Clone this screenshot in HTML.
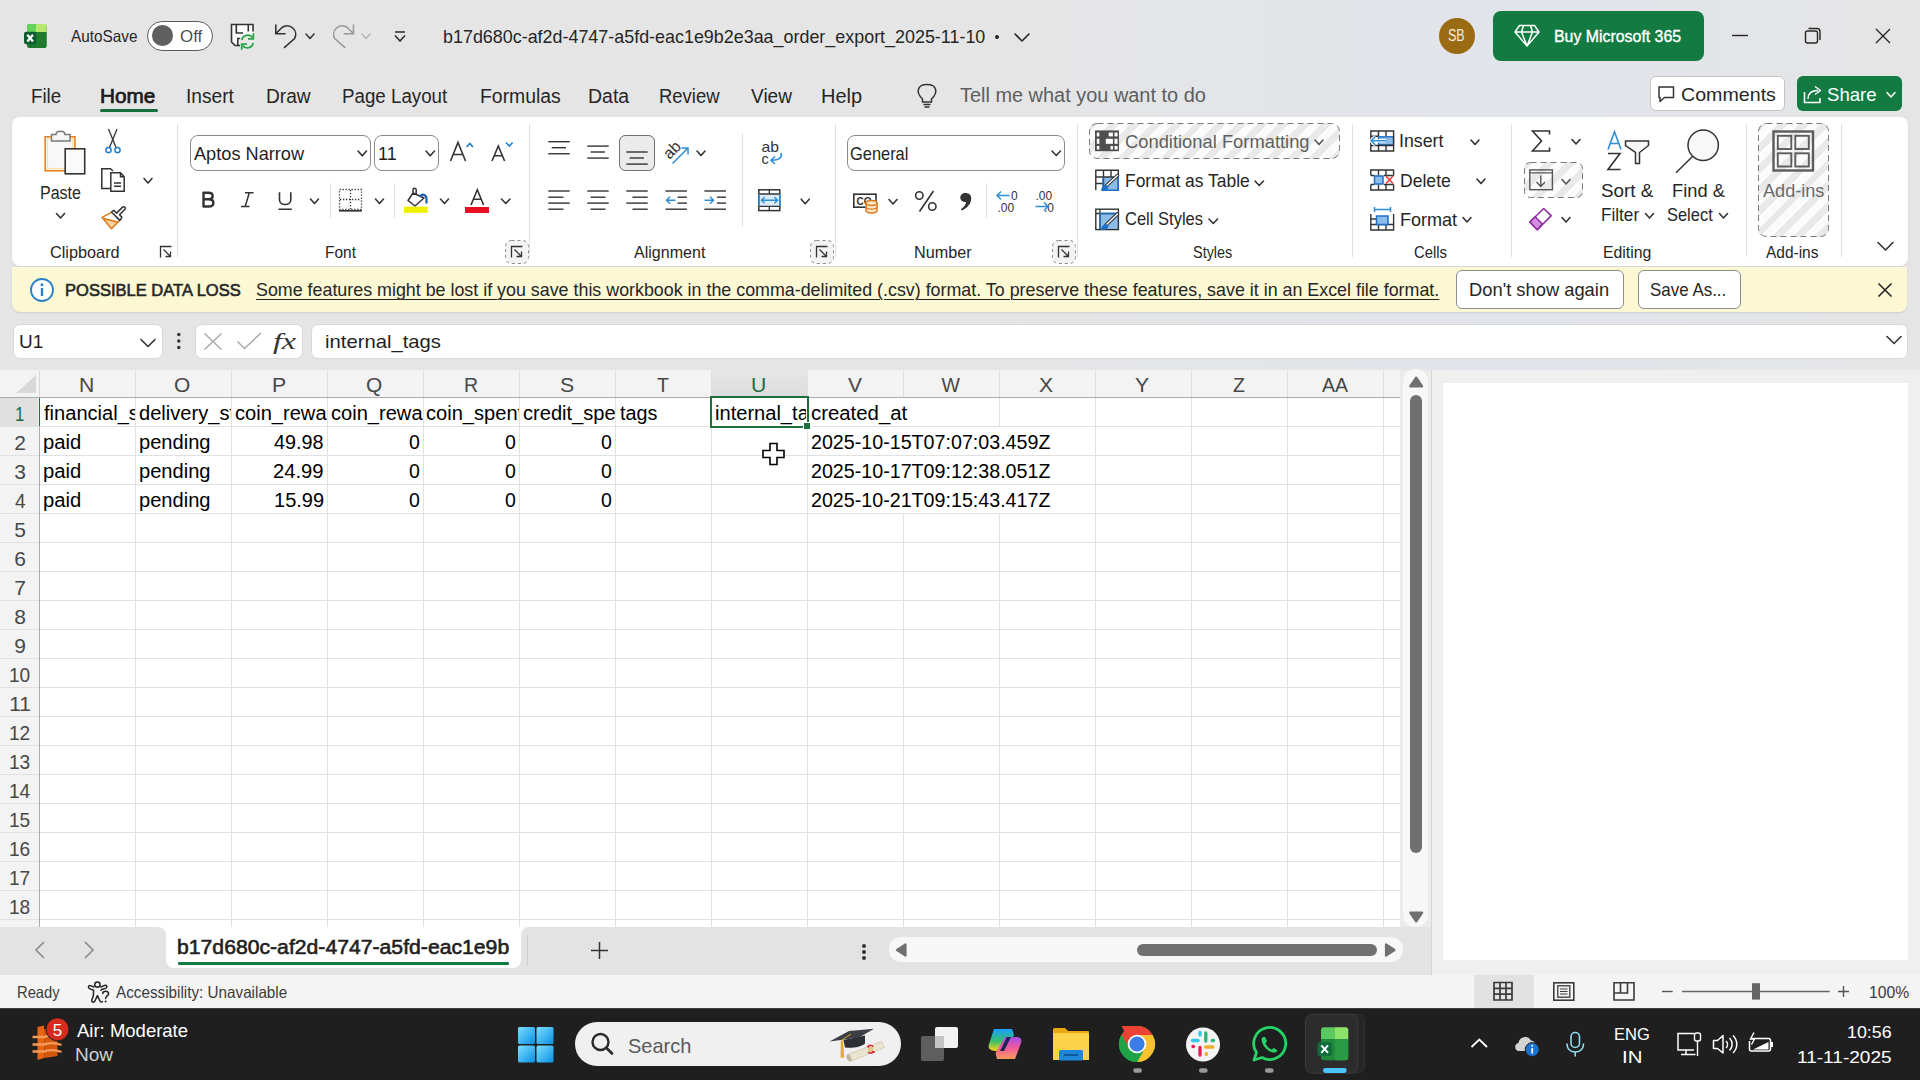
<!DOCTYPE html><html><head><meta charset="utf-8"><style>
html,body{margin:0;padding:0;width:1920px;height:1080px;overflow:hidden;background:#e5e5e5;font-family:'Liberation Sans',sans-serif;}
</style></head><body>
<div style="position:absolute;left:0px;top:0px;width:1920px;height:370px;background:#e5e5e5;"></div>
<div style="position:absolute;left:960px;top:0;width:960px;height:370px;background:linear-gradient(90deg,rgba(229,229,229,0),rgba(225,228,235,1) 60%,rgba(229,229,229,1))"></div>
<div style="position:absolute;left:71.00px;top:28.48px;font-family:'Liberation Sans', sans-serif;font-size:16.5px;line-height:16.5px;color:#262626;font-weight:400;white-space:pre;transform:scaleX(0.9296);transform-origin:0 0;">AutoSave</div>
<div style="position:absolute;left:147px;top:21px;width:65.5px;height:30px;background:#ffffff;border:1.5px solid #5a5a5a;border-radius:15px;box-sizing:border-box;"></div>
<div style="position:absolute;left:152.2px;top:25.1px;width:20.6px;height:20.6px;background:#5f5f5f;border-radius:50%;"></div>
<div style="position:absolute;left:180.48px;top:27.98px;font-family:'Liberation Sans', sans-serif;font-size:16.5px;line-height:16.5px;color:#505050;font-weight:400;white-space:pre;transform:scaleX(1.0238);transform-origin:0 0;">Off</div>
<div style="position:absolute;left:443.06px;top:26.85px;font-family:'Liberation Sans', sans-serif;font-size:19px;line-height:19px;color:#262626;font-weight:400;white-space:pre;transform:scaleX(0.9425);transform-origin:0 0;">b17d680c-af2d-4747-a5fd-eac1e9b2e3aa_order_export_2025-11-10</div>
<div style="position:absolute;left:995px;top:35px;width:4px;height:4px;background:#262626;border-radius:50%;"></div>
<div style="position:absolute;left:1439px;top:18px;width:36px;height:36px;background:#9a6b12;border-radius:50%;"></div>
<div style="position:absolute;left:1447.62px;top:28.10px;font-family:'Liberation Sans', sans-serif;font-size:16px;line-height:16px;color:#f6ecd8;font-weight:400;white-space:pre;transform:scaleX(0.7800);transform-origin:0 0;">SB</div>
<div style="position:absolute;left:1493px;top:11px;width:211px;height:50px;background:#137b41;border-radius:8px;"></div>
<div style="position:absolute;left:1554.42px;top:27.73px;font-family:'Liberation Sans', sans-serif;font-size:16.2px;line-height:16.2px;color:#ffffff;font-weight:400;white-space:pre;transform:scaleX(0.9812);transform-origin:0 0;-webkit-text-stroke:0.35px #ffffff;">Buy Microsoft 365</div>
<div style="position:absolute;left:31.06px;top:86.00px;font-family:'Liberation Sans', sans-serif;font-size:20px;line-height:20px;color:#262626;font-weight:400;white-space:pre;transform:scaleX(0.9355);transform-origin:0 0;">File</div>
<div style="position:absolute;left:99.96px;top:86.00px;font-family:'Liberation Sans', sans-serif;font-size:20px;line-height:20px;color:#1a1a1a;font-weight:400;white-space:pre;transform:scaleX(1.0385);transform-origin:0 0;-webkit-text-stroke:0.7px #1a1a1a;">Home</div>
<div style="position:absolute;left:186.08px;top:86.00px;font-family:'Liberation Sans', sans-serif;font-size:20px;line-height:20px;color:#262626;font-weight:400;white-space:pre;transform:scaleX(0.9583);transform-origin:0 0;">Insert</div>
<div style="position:absolute;left:266.04px;top:86.00px;font-family:'Liberation Sans', sans-serif;font-size:20px;line-height:20px;color:#262626;font-weight:400;white-space:pre;transform:scaleX(0.9565);transform-origin:0 0;">Draw</div>
<div style="position:absolute;left:342.06px;top:86.00px;font-family:'Liberation Sans', sans-serif;font-size:20px;line-height:20px;color:#262626;font-weight:400;white-space:pre;transform:scaleX(0.9369);transform-origin:0 0;">Page Layout</div>
<div style="position:absolute;left:479.53px;top:86.00px;font-family:'Liberation Sans', sans-serif;font-size:20px;line-height:20px;color:#262626;font-weight:400;white-space:pre;transform:scaleX(0.9695);transform-origin:0 0;">Formulas</div>
<div style="position:absolute;left:588.02px;top:86.00px;font-family:'Liberation Sans', sans-serif;font-size:20px;line-height:20px;color:#262626;font-weight:400;white-space:pre;transform:scaleX(0.9756);transform-origin:0 0;">Data</div>
<div style="position:absolute;left:659.08px;top:86.00px;font-family:'Liberation Sans', sans-serif;font-size:20px;line-height:20px;color:#262626;font-weight:400;white-space:pre;transform:scaleX(0.9231);transform-origin:0 0;">Review</div>
<div style="position:absolute;left:751.00px;top:86.00px;font-family:'Liberation Sans', sans-serif;font-size:20px;line-height:20px;color:#262626;font-weight:400;white-space:pre;transform:scaleX(0.9535);transform-origin:0 0;">View</div>
<div style="position:absolute;left:821.00px;top:86.00px;font-family:'Liberation Sans', sans-serif;font-size:20px;line-height:20px;color:#262626;font-weight:400;white-space:pre;">Help</div>
<div style="position:absolute;left:100px;top:108.5px;width:58px;height:3.5px;background:#13703d;border-radius:2px;"></div>
<div style="position:absolute;left:960.00px;top:85.00px;font-family:'Liberation Sans', sans-serif;font-size:20px;line-height:20px;color:#5e5e5e;font-weight:400;white-space:pre;transform:scaleX(0.9959);transform-origin:0 0;">Tell me what you want to do</div>
<div style="position:absolute;left:1650px;top:76px;width:135px;height:35px;background:#ffffff;border:1px solid #c4c4c4;border-radius:6px;box-sizing:border-box;"></div>
<div style="position:absolute;left:1680.67px;top:85.35px;font-family:'Liberation Sans', sans-serif;font-size:19px;line-height:19px;color:#262626;font-weight:400;white-space:pre;transform:scaleX(1.0333);transform-origin:0 0;">Comments</div>
<div style="position:absolute;left:1797px;top:76px;width:105px;height:35px;background:#137b41;border-radius:6px;"></div>
<div style="position:absolute;left:1827.02px;top:85.35px;font-family:'Liberation Sans', sans-serif;font-size:19px;line-height:19px;color:#ffffff;font-weight:400;white-space:pre;transform:scaleX(0.9796);transform-origin:0 0;">Share</div>
<div style="position:absolute;left:12px;top:117px;width:1896px;height:149px;background:#ffffff;border-radius:8px;box-shadow:0 1px 2px rgba(0,0,0,0.08);"></div>
<div style="position:absolute;left:177px;top:124px;width:1px;height:133px;background:#e0e0e0;"></div>
<div style="position:absolute;left:529px;top:124px;width:1px;height:133px;background:#e0e0e0;"></div>
<div style="position:absolute;left:835px;top:124px;width:1px;height:133px;background:#e0e0e0;"></div>
<div style="position:absolute;left:1077px;top:124px;width:1px;height:133px;background:#e0e0e0;"></div>
<div style="position:absolute;left:1352px;top:124px;width:1px;height:133px;background:#e0e0e0;"></div>
<div style="position:absolute;left:1511px;top:124px;width:1px;height:133px;background:#e0e0e0;"></div>
<div style="position:absolute;left:1746px;top:124px;width:1px;height:133px;background:#e0e0e0;"></div>
<div style="position:absolute;left:1841px;top:124px;width:1px;height:133px;background:#e0e0e0;"></div>
<div style="position:absolute;left:742px;top:133px;width:1px;height:94px;background:#e0e0e0;"></div>
<div style="position:absolute;left:330px;top:183px;width:1px;height:35px;background:#e0e0e0;"></div>
<div style="position:absolute;left:394px;top:183px;width:1px;height:35px;background:#e0e0e0;"></div>
<div style="position:absolute;left:986px;top:183px;width:1px;height:35px;background:#e0e0e0;"></div>
<div style="position:absolute;left:50.01px;top:243.97px;font-family:'Liberation Sans', sans-serif;font-size:16.5px;line-height:16.5px;color:#262626;font-weight:400;white-space:pre;transform:scaleX(0.9855);transform-origin:0 0;">Clipboard</div>
<div style="position:absolute;left:325.06px;top:243.97px;font-family:'Liberation Sans', sans-serif;font-size:16.5px;line-height:16.5px;color:#262626;font-weight:400;white-space:pre;transform:scaleX(0.9375);transform-origin:0 0;">Font</div>
<div style="position:absolute;left:634.00px;top:243.97px;font-family:'Liberation Sans', sans-serif;font-size:16.5px;line-height:16.5px;color:#262626;font-weight:400;white-space:pre;transform:scaleX(0.9726);transform-origin:0 0;">Alignment</div>
<div style="position:absolute;left:914.02px;top:243.97px;font-family:'Liberation Sans', sans-serif;font-size:16.5px;line-height:16.5px;color:#262626;font-weight:400;white-space:pre;transform:scaleX(0.9828);transform-origin:0 0;">Number</div>
<div style="position:absolute;left:1192.62px;top:243.97px;font-family:'Liberation Sans', sans-serif;font-size:16.5px;line-height:16.5px;color:#262626;font-weight:400;white-space:pre;transform:scaleX(0.8750);transform-origin:0 0;">Styles</div>
<div style="position:absolute;left:1413.60px;top:243.97px;font-family:'Liberation Sans', sans-serif;font-size:16.5px;line-height:16.5px;color:#262626;font-weight:400;white-space:pre;transform:scaleX(0.9000);transform-origin:0 0;">Cells</div>
<div style="position:absolute;left:1603.04px;top:243.97px;font-family:'Liberation Sans', sans-serif;font-size:16.5px;line-height:16.5px;color:#262626;font-weight:400;white-space:pre;transform:scaleX(0.9592);transform-origin:0 0;">Editing</div>
<div style="position:absolute;left:1765.50px;top:243.97px;font-family:'Liberation Sans', sans-serif;font-size:16.5px;line-height:16.5px;color:#262626;font-weight:400;white-space:pre;transform:scaleX(0.9375);transform-origin:0 0;">Add-ins</div>
<div style="position:absolute;left:40.11px;top:183.70px;font-family:'Liberation Sans', sans-serif;font-size:18px;line-height:18px;color:#262626;font-weight:400;white-space:pre;transform:scaleX(0.8889);transform-origin:0 0;">Paste</div>
<div style="position:absolute;left:190px;top:135px;width:181px;height:36px;background:#ffffff;border:1px solid #8a8a8a;border-radius:8px;box-sizing:border-box;"></div>
<div style="position:absolute;left:193.50px;top:143.85px;font-family:'Liberation Sans', sans-serif;font-size:19px;line-height:19px;color:#1f1f1f;font-weight:400;white-space:pre;transform:scaleX(0.9565);transform-origin:0 0;">Aptos Narrow</div>
<div style="position:absolute;left:374px;top:135px;width:65px;height:36px;background:#ffffff;border:1px solid #8a8a8a;border-radius:8px;box-sizing:border-box;"></div>
<div style="position:absolute;left:377.56px;top:143.85px;font-family:'Liberation Sans', sans-serif;font-size:19px;line-height:19px;color:#1f1f1f;font-weight:400;white-space:pre;transform:scaleX(0.9444);transform-origin:0 0;">11</div>
<div style="position:absolute;left:847px;top:135px;width:218px;height:36px;background:#ffffff;border:1px solid #8a8a8a;border-radius:8px;box-sizing:border-box;"></div>
<div style="position:absolute;left:850.14px;top:143.85px;font-family:'Liberation Sans', sans-serif;font-size:19px;line-height:19px;color:#1f1f1f;font-weight:400;white-space:pre;transform:scaleX(0.8636);transform-origin:0 0;">General</div>
<div style="position:absolute;left:619px;top:135px;width:36px;height:36px;background:#efefef;border:1px solid #8f8f8f;border-radius:7px;box-sizing:border-box;"></div>
<div style="position:absolute;left:1089px;top:123px;width:251px;height:36px;box-sizing:border-box;border-radius:8px;background:repeating-linear-gradient(135deg,#e9e9e9 0 7px,#fcfcfc 7px 15px);"></div>
<div style="position:absolute;left:1124.53px;top:131.55px;font-family:'Liberation Sans', sans-serif;font-size:19px;line-height:19px;color:#5f5f5f;font-weight:400;white-space:pre;transform:scaleX(0.9656);transform-origin:0 0;">Conditional Formatting</div>
<div style="position:absolute;left:1125.08px;top:170.85px;font-family:'Liberation Sans', sans-serif;font-size:19px;line-height:19px;color:#262626;font-weight:400;white-space:pre;transform:scaleX(0.9179);transform-origin:0 0;">Format as Table</div>
<div style="position:absolute;left:1124.63px;top:209.45px;font-family:'Liberation Sans', sans-serif;font-size:19px;line-height:19px;color:#262626;font-weight:400;white-space:pre;transform:scaleX(0.8693);transform-origin:0 0;">Cell Styles</div>
<div style="position:absolute;left:1399.13px;top:131.35px;font-family:'Liberation Sans', sans-serif;font-size:19px;line-height:19px;color:#262626;font-weight:400;white-space:pre;transform:scaleX(0.9348);transform-origin:0 0;">Insert</div>
<div style="position:absolute;left:1400.08px;top:170.65px;font-family:'Liberation Sans', sans-serif;font-size:19px;line-height:19px;color:#262626;font-weight:400;white-space:pre;transform:scaleX(0.9245);transform-origin:0 0;">Delete</div>
<div style="position:absolute;left:1400.05px;top:209.55px;font-family:'Liberation Sans', sans-serif;font-size:19px;line-height:19px;color:#262626;font-weight:400;white-space:pre;transform:scaleX(0.9492);transform-origin:0 0;">Format</div>
<div style="position:absolute;left:1524px;top:162px;width:59px;height:36px;box-sizing:border-box;border-radius:6px;background:repeating-linear-gradient(135deg,#e9e9e9 0 7px,#fcfcfc 7px 15px);"></div>
<div style="position:absolute;left:1601.41px;top:181.05px;font-family:'Liberation Sans', sans-serif;font-size:19px;line-height:19px;color:#262626;font-weight:400;white-space:pre;transform:scaleX(0.9923);transform-origin:0 0;">Sort &amp;</div>
<div style="position:absolute;left:1601.10px;top:204.65px;font-family:'Liberation Sans', sans-serif;font-size:19px;line-height:19px;color:#262626;font-weight:400;white-space:pre;transform:scaleX(0.9024);transform-origin:0 0;">Filter</div>
<div style="position:absolute;left:1671.84px;top:181.05px;font-family:'Liberation Sans', sans-serif;font-size:19px;line-height:19px;color:#262626;font-weight:400;white-space:pre;transform:scaleX(0.9630);transform-origin:0 0;">Find &amp;</div>
<div style="position:absolute;left:1666.83px;top:204.65px;font-family:'Liberation Sans', sans-serif;font-size:19px;line-height:19px;color:#262626;font-weight:400;white-space:pre;transform:scaleX(0.8654);transform-origin:0 0;">Select</div>
<div style="position:absolute;left:1758px;top:123px;width:71px;height:114px;box-sizing:border-box;border-radius:8px;background:repeating-linear-gradient(135deg,#e9e9e9 0 7px,#fcfcfc 7px 15px);"></div>
<div style="position:absolute;left:1762.70px;top:181.05px;font-family:'Liberation Sans', sans-serif;font-size:19px;line-height:19px;color:#6a6a6a;font-weight:400;white-space:pre;transform:scaleX(0.9531);transform-origin:0 0;">Add-ins</div>
<div style="position:absolute;left:12px;top:267px;width:1895px;height:45px;background:#fbf8d3;border-radius:0 0 8px 8px;box-shadow:0 1px 2px rgba(0,0,0,0.10);"></div>
<div style="position:absolute;left:65.28px;top:281.80px;font-family:'Liberation Sans', sans-serif;font-size:17px;line-height:17px;color:#262626;font-weight:400;white-space:pre;transform:scaleX(0.9722);transform-origin:0 0;-webkit-text-stroke:0.6px #262626;">POSSIBLE DATA LOSS</div>
<div style="position:absolute;left:256.06px;top:280.35px;font-family:'Liberation Sans', sans-serif;font-size:19px;line-height:19px;color:#262626;font-weight:400;white-space:pre;transform:scaleX(0.9395);transform-origin:0 0;text-decoration:underline;text-decoration-thickness:1px;text-underline-offset:3px;">Some features might be lost if you save this workbook in the comma-delimited (.csv) format. To preserve these features, save it in an Excel file format.</div>
<div style="position:absolute;left:1456px;top:270px;width:168px;height:39px;background:#ffffff;border:1px solid #8d8d8d;border-radius:6px;box-sizing:border-box;"></div>
<div style="position:absolute;left:1469.03px;top:279.85px;font-family:'Liberation Sans', sans-serif;font-size:19px;line-height:19px;color:#262626;font-weight:400;white-space:pre;transform:scaleX(0.9650);transform-origin:0 0;">Don't show again</div>
<div style="position:absolute;left:1638px;top:270px;width:103px;height:39px;background:#ffffff;border:1px solid #8d8d8d;border-radius:6px;box-sizing:border-box;"></div>
<div style="position:absolute;left:1650.11px;top:279.85px;font-family:'Liberation Sans', sans-serif;font-size:19px;line-height:19px;color:#262626;font-weight:400;white-space:pre;transform:scaleX(0.8916);transform-origin:0 0;">Save As...</div>
<div style="position:absolute;left:13px;top:324px;width:150px;height:35px;background:#ffffff;border-radius:7px;border:1px solid #d9d9d9;box-sizing:border-box;"></div>
<div style="position:absolute;left:19.00px;top:332.10px;font-family:'Liberation Sans', sans-serif;font-size:19px;line-height:19px;color:#1f1f1f;font-weight:400;white-space:pre;">U1</div>
<div style="position:absolute;left:195px;top:324px;width:108px;height:35px;background:#ffffff;border-radius:7px;border:1px solid #d9d9d9;box-sizing:border-box;"></div>
<div style="position:absolute;left:311px;top:324px;width:1597px;height:35px;background:#ffffff;border-radius:7px;border:1px solid #d9d9d9;box-sizing:border-box;"></div>
<div style="position:absolute;left:325.18px;top:331.85px;font-family:'Liberation Sans', sans-serif;font-size:19px;line-height:19px;color:#1f1f1f;font-weight:400;white-space:pre;transform:scaleX(1.0654);transform-origin:0 0;">internal_tags</div>
<div style="position:absolute;left:0px;top:370px;width:1400px;height:557px;background:#ffffff;"></div>
<div style="position:absolute;left:0px;top:370px;width:1400px;height:27px;background:#f3f3f3;"></div>
<div style="position:absolute;left:0px;top:370px;width:39px;height:557px;background:#f3f3f3;"></div>
<div style="position:absolute;left:711px;top:370px;width:97px;height:27px;background:linear-gradient(#e6e6e6,#dcdcdc)"></div>
<div style="position:absolute;left:0px;top:398px;width:38px;height:28px;background:#e0e0e0;"></div>
<div style="position:absolute;left:39px;top:370px;width:1px;height:557px;background:#e1e1e1;"></div>
<div style="position:absolute;left:135px;top:370px;width:1px;height:557px;background:#e1e1e1;"></div>
<div style="position:absolute;left:231px;top:370px;width:1px;height:557px;background:#e1e1e1;"></div>
<div style="position:absolute;left:327px;top:370px;width:1px;height:557px;background:#e1e1e1;"></div>
<div style="position:absolute;left:423px;top:370px;width:1px;height:557px;background:#e1e1e1;"></div>
<div style="position:absolute;left:519px;top:370px;width:1px;height:557px;background:#e1e1e1;"></div>
<div style="position:absolute;left:615px;top:370px;width:1px;height:557px;background:#e1e1e1;"></div>
<div style="position:absolute;left:711px;top:370px;width:1px;height:557px;background:#e1e1e1;"></div>
<div style="position:absolute;left:807px;top:370px;width:1px;height:557px;background:#e1e1e1;"></div>
<div style="position:absolute;left:903px;top:370px;width:1px;height:557px;background:#e1e1e1;"></div>
<div style="position:absolute;left:999px;top:370px;width:1px;height:557px;background:#e1e1e1;"></div>
<div style="position:absolute;left:1095px;top:370px;width:1px;height:557px;background:#e1e1e1;"></div>
<div style="position:absolute;left:1191px;top:370px;width:1px;height:557px;background:#e1e1e1;"></div>
<div style="position:absolute;left:1287px;top:370px;width:1px;height:557px;background:#e1e1e1;"></div>
<div style="position:absolute;left:1383px;top:370px;width:1px;height:557px;background:#e1e1e1;"></div>
<div style="position:absolute;left:0px;top:397px;width:1400px;height:1px;background:#e1e1e1;"></div>
<div style="position:absolute;left:0px;top:426px;width:1400px;height:1px;background:#e1e1e1;"></div>
<div style="position:absolute;left:0px;top:455px;width:1400px;height:1px;background:#e1e1e1;"></div>
<div style="position:absolute;left:0px;top:484px;width:1400px;height:1px;background:#e1e1e1;"></div>
<div style="position:absolute;left:0px;top:513px;width:1400px;height:1px;background:#e1e1e1;"></div>
<div style="position:absolute;left:0px;top:542px;width:1400px;height:1px;background:#e1e1e1;"></div>
<div style="position:absolute;left:0px;top:571px;width:1400px;height:1px;background:#e1e1e1;"></div>
<div style="position:absolute;left:0px;top:600px;width:1400px;height:1px;background:#e1e1e1;"></div>
<div style="position:absolute;left:0px;top:629px;width:1400px;height:1px;background:#e1e1e1;"></div>
<div style="position:absolute;left:0px;top:658px;width:1400px;height:1px;background:#e1e1e1;"></div>
<div style="position:absolute;left:0px;top:687px;width:1400px;height:1px;background:#e1e1e1;"></div>
<div style="position:absolute;left:0px;top:716px;width:1400px;height:1px;background:#e1e1e1;"></div>
<div style="position:absolute;left:0px;top:745px;width:1400px;height:1px;background:#e1e1e1;"></div>
<div style="position:absolute;left:0px;top:774px;width:1400px;height:1px;background:#e1e1e1;"></div>
<div style="position:absolute;left:0px;top:803px;width:1400px;height:1px;background:#e1e1e1;"></div>
<div style="position:absolute;left:0px;top:832px;width:1400px;height:1px;background:#e1e1e1;"></div>
<div style="position:absolute;left:0px;top:861px;width:1400px;height:1px;background:#e1e1e1;"></div>
<div style="position:absolute;left:0px;top:890px;width:1400px;height:1px;background:#e1e1e1;"></div>
<div style="position:absolute;left:0px;top:919px;width:1400px;height:1px;background:#e1e1e1;"></div>
<div style="position:absolute;left:0px;top:948px;width:1400px;height:1px;background:#e1e1e1;"></div>
<div style="position:absolute;left:0px;top:397px;width:1400px;height:1px;background:#ababab;"></div>
<div style="position:absolute;left:39px;top:397px;width:1px;height:530px;background:#ababab;"></div>
<div style="position:absolute;left:39px;top:372px;width:1px;height:25px;background:#d8d8d8;"></div>
<div style="position:absolute;left:903px;top:398px;width:1px;height:28px;background:#ffffff;"></div>
<div style="position:absolute;left:903px;top:427px;width:1px;height:28px;background:#ffffff;"></div>
<div style="position:absolute;left:999px;top:427px;width:1px;height:28px;background:#ffffff;"></div>
<div style="position:absolute;left:903px;top:456px;width:1px;height:28px;background:#ffffff;"></div>
<div style="position:absolute;left:999px;top:456px;width:1px;height:28px;background:#ffffff;"></div>
<div style="position:absolute;left:903px;top:485px;width:1px;height:28px;background:#ffffff;"></div>
<div style="position:absolute;left:999px;top:485px;width:1px;height:28px;background:#ffffff;"></div>
<div style="position:absolute;left:79.42px;top:375.93px;font-family:'Liberation Sans', sans-serif;font-size:19.5px;line-height:19.5px;color:#474747;font-weight:400;white-space:pre;transform:scaleX(1.0833);transform-origin:0 0;">N</div>
<div style="position:absolute;left:174.43px;top:375.93px;font-family:'Liberation Sans', sans-serif;font-size:19.5px;line-height:19.5px;color:#474747;font-weight:400;white-space:pre;transform:scaleX(1.0714);transform-origin:0 0;">O</div>
<div style="position:absolute;left:271.91px;top:375.93px;font-family:'Liberation Sans', sans-serif;font-size:19.5px;line-height:19.5px;color:#474747;font-weight:400;white-space:pre;transform:scaleX(1.0909);transform-origin:0 0;">P</div>
<div style="position:absolute;left:366.43px;top:375.93px;font-family:'Liberation Sans', sans-serif;font-size:19.5px;line-height:19.5px;color:#474747;font-weight:400;white-space:pre;transform:scaleX(1.0714);transform-origin:0 0;">Q</div>
<div style="position:absolute;left:464.00px;top:375.93px;font-family:'Liberation Sans', sans-serif;font-size:19.5px;line-height:19.5px;color:#474747;font-weight:400;white-space:pre;">R</div>
<div style="position:absolute;left:559.91px;top:375.93px;font-family:'Liberation Sans', sans-serif;font-size:19.5px;line-height:19.5px;color:#474747;font-weight:400;white-space:pre;transform:scaleX(1.0909);transform-origin:0 0;">S</div>
<div style="position:absolute;left:657.00px;top:375.93px;font-family:'Liberation Sans', sans-serif;font-size:19.5px;line-height:19.5px;color:#474747;font-weight:400;white-space:pre;">T</div>
<div style="position:absolute;left:751.42px;top:375.93px;font-family:'Liberation Sans', sans-serif;font-size:19.5px;line-height:19.5px;color:#1e6b45;font-weight:400;white-space:pre;transform:scaleX(1.0833);transform-origin:0 0;">U</div>
<div style="position:absolute;left:848.00px;top:375.93px;font-family:'Liberation Sans', sans-serif;font-size:19.5px;line-height:19.5px;color:#474747;font-weight:400;white-space:pre;transform:scaleX(1.0769);transform-origin:0 0;">V</div>
<div style="position:absolute;left:941.50px;top:375.93px;font-family:'Liberation Sans', sans-serif;font-size:19.5px;line-height:19.5px;color:#474747;font-weight:400;white-space:pre;">W</div>
<div style="position:absolute;left:1039.42px;top:375.93px;font-family:'Liberation Sans', sans-serif;font-size:19.5px;line-height:19.5px;color:#474747;font-weight:400;white-space:pre;transform:scaleX(1.0833);transform-origin:0 0;">X</div>
<div style="position:absolute;left:1135.42px;top:375.93px;font-family:'Liberation Sans', sans-serif;font-size:19.5px;line-height:19.5px;color:#474747;font-weight:400;white-space:pre;transform:scaleX(1.0833);transform-origin:0 0;">Y</div>
<div style="position:absolute;left:1233.00px;top:375.93px;font-family:'Liberation Sans', sans-serif;font-size:19.5px;line-height:19.5px;color:#474747;font-weight:400;white-space:pre;">Z</div>
<div style="position:absolute;left:1322.00px;top:375.93px;font-family:'Liberation Sans', sans-serif;font-size:19.5px;line-height:19.5px;color:#474747;font-weight:400;white-space:pre;">AA</div>
<div style="position:absolute;left:15.40px;top:402.65px;font-family:'Liberation Sans', sans-serif;font-size:21px;line-height:21px;color:#1e6b45;font-weight:400;white-space:pre;transform:scaleX(0.8000);transform-origin:0 0;">1</div>
<div style="position:absolute;left:14.20px;top:431.65px;font-family:'Liberation Sans', sans-serif;font-size:21px;line-height:21px;color:#474747;font-weight:400;white-space:pre;">2</div>
<div style="position:absolute;left:14.20px;top:460.65px;font-family:'Liberation Sans', sans-serif;font-size:21px;line-height:21px;color:#474747;font-weight:400;white-space:pre;">3</div>
<div style="position:absolute;left:15.20px;top:489.65px;font-family:'Liberation Sans', sans-serif;font-size:21px;line-height:21px;color:#474747;font-weight:400;white-space:pre;transform:scaleX(0.9091);transform-origin:0 0;">4</div>
<div style="position:absolute;left:14.20px;top:518.65px;font-family:'Liberation Sans', sans-serif;font-size:21px;line-height:21px;color:#474747;font-weight:400;white-space:pre;">5</div>
<div style="position:absolute;left:14.20px;top:547.65px;font-family:'Liberation Sans', sans-serif;font-size:21px;line-height:21px;color:#474747;font-weight:400;white-space:pre;">6</div>
<div style="position:absolute;left:14.20px;top:576.65px;font-family:'Liberation Sans', sans-serif;font-size:21px;line-height:21px;color:#474747;font-weight:400;white-space:pre;">7</div>
<div style="position:absolute;left:14.20px;top:605.65px;font-family:'Liberation Sans', sans-serif;font-size:21px;line-height:21px;color:#474747;font-weight:400;white-space:pre;">8</div>
<div style="position:absolute;left:14.20px;top:634.65px;font-family:'Liberation Sans', sans-serif;font-size:21px;line-height:21px;color:#474747;font-weight:400;white-space:pre;">9</div>
<div style="position:absolute;left:9.29px;top:663.65px;font-family:'Liberation Sans', sans-serif;font-size:21px;line-height:21px;color:#474747;font-weight:400;white-space:pre;transform:scaleX(0.9091);transform-origin:0 0;">10</div>
<div style="position:absolute;left:9.20px;top:692.65px;font-family:'Liberation Sans', sans-serif;font-size:21px;line-height:21px;color:#474747;font-weight:400;white-space:pre;">11</div>
<div style="position:absolute;left:9.29px;top:721.65px;font-family:'Liberation Sans', sans-serif;font-size:21px;line-height:21px;color:#474747;font-weight:400;white-space:pre;transform:scaleX(0.9091);transform-origin:0 0;">12</div>
<div style="position:absolute;left:9.29px;top:750.65px;font-family:'Liberation Sans', sans-serif;font-size:21px;line-height:21px;color:#474747;font-weight:400;white-space:pre;transform:scaleX(0.9091);transform-origin:0 0;">13</div>
<div style="position:absolute;left:9.29px;top:779.65px;font-family:'Liberation Sans', sans-serif;font-size:21px;line-height:21px;color:#474747;font-weight:400;white-space:pre;transform:scaleX(0.9091);transform-origin:0 0;">14</div>
<div style="position:absolute;left:9.29px;top:808.65px;font-family:'Liberation Sans', sans-serif;font-size:21px;line-height:21px;color:#474747;font-weight:400;white-space:pre;transform:scaleX(0.9091);transform-origin:0 0;">15</div>
<div style="position:absolute;left:9.29px;top:837.65px;font-family:'Liberation Sans', sans-serif;font-size:21px;line-height:21px;color:#474747;font-weight:400;white-space:pre;transform:scaleX(0.9091);transform-origin:0 0;">16</div>
<div style="position:absolute;left:9.29px;top:866.65px;font-family:'Liberation Sans', sans-serif;font-size:21px;line-height:21px;color:#474747;font-weight:400;white-space:pre;transform:scaleX(0.9091);transform-origin:0 0;">17</div>
<div style="position:absolute;left:9.29px;top:895.65px;font-family:'Liberation Sans', sans-serif;font-size:21px;line-height:21px;color:#474747;font-weight:400;white-space:pre;transform:scaleX(0.9091);transform-origin:0 0;">18</div>
<div style="position:absolute;left:710px;top:396px;width:99px;height:32px;background:transparent;border:2px solid #1e6e3e;box-sizing:border-box;"></div>
<div style="position:absolute;left:803px;top:422px;width:6px;height:6px;background:#1e6e3e;border:1px solid #fff;box-sizing:content-box;"></div>
<div style="position:absolute;left:38.5px;top:398px;width:1.8px;height:28px;background:#1e6e3e;"></div>
<div style="position:absolute;left:40px;top:398px;width:95px;height:28px;overflow:hidden;"><div style="position:absolute;left:0;top:-398px;width:0;height:0"><div style="position:absolute;left:3.70px;top:404.12px;font-family:'Liberation Sans', sans-serif;font-size:19.5px;line-height:19.5px;color:#000;font-weight:400;white-space:pre;transform:scaleX(1.0300);transform-origin:0 0;">financial_status</div></div></div>
<div style="position:absolute;left:136px;top:398px;width:95px;height:28px;overflow:hidden;"><div style="position:absolute;left:0;top:-398px;width:0;height:0"><div style="position:absolute;left:2.67px;top:404.12px;font-family:'Liberation Sans', sans-serif;font-size:19.5px;line-height:19.5px;color:#000;font-weight:400;white-space:pre;transform:scaleX(1.0300);transform-origin:0 0;">delivery_status</div></div></div>
<div style="position:absolute;left:232px;top:398px;width:95px;height:28px;overflow:hidden;"><div style="position:absolute;left:0;top:-398px;width:0;height:0"><div style="position:absolute;left:2.77px;top:404.12px;font-family:'Liberation Sans', sans-serif;font-size:19.5px;line-height:19.5px;color:#000;font-weight:400;white-space:pre;transform:scaleX(1.0300);transform-origin:0 0;">coin_rewarded</div></div></div>
<div style="position:absolute;left:328px;top:398px;width:95px;height:28px;overflow:hidden;"><div style="position:absolute;left:0;top:-398px;width:0;height:0"><div style="position:absolute;left:2.57px;top:404.12px;font-family:'Liberation Sans', sans-serif;font-size:19.5px;line-height:19.5px;color:#000;font-weight:400;white-space:pre;transform:scaleX(1.0300);transform-origin:0 0;">coin_rewarded2</div></div></div>
<div style="position:absolute;left:424px;top:398px;width:95px;height:28px;overflow:hidden;"><div style="position:absolute;left:0;top:-398px;width:0;height:0"><div style="position:absolute;left:2.37px;top:404.12px;font-family:'Liberation Sans', sans-serif;font-size:19.5px;line-height:19.5px;color:#000;font-weight:400;white-space:pre;transform:scaleX(1.0300);transform-origin:0 0;">coin_spent</div></div></div>
<div style="position:absolute;left:520px;top:398px;width:95px;height:28px;overflow:hidden;"><div style="position:absolute;left:0;top:-398px;width:0;height:0"><div style="position:absolute;left:2.67px;top:404.12px;font-family:'Liberation Sans', sans-serif;font-size:19.5px;line-height:19.5px;color:#000;font-weight:400;white-space:pre;transform:scaleX(1.0300);transform-origin:0 0;">credit_spent</div></div></div>
<div style="position:absolute;left:619.50px;top:404.12px;font-family:'Liberation Sans', sans-serif;font-size:19.5px;line-height:19.5px;color:#000;font-weight:400;white-space:pre;transform:scaleX(1.0139);transform-origin:0 0;">tags</div>
<div style="position:absolute;left:713px;top:398px;width:93px;height:27px;overflow:hidden;"><div style="position:absolute;left:0;top:-398px;width:0;height:0"><div style="position:absolute;left:1.57px;top:404.12px;font-family:'Liberation Sans', sans-serif;font-size:19.5px;line-height:19.5px;color:#000;font-weight:400;white-space:pre;transform:scaleX(1.0300);transform-origin:0 0;">internal_tags</div></div></div>
<div style="position:absolute;left:810.66px;top:404.12px;font-family:'Liberation Sans', sans-serif;font-size:19.5px;line-height:19.5px;color:#000;font-weight:400;white-space:pre;transform:scaleX(1.0440);transform-origin:0 0;">created_at</div>
<div style="position:absolute;left:42.66px;top:433.12px;font-family:'Liberation Sans', sans-serif;font-size:19.5px;line-height:19.5px;color:#000;font-weight:400;white-space:pre;transform:scaleX(1.0371);transform-origin:0 0;">paid</div>
<div style="position:absolute;left:138.67px;top:433.12px;font-family:'Liberation Sans', sans-serif;font-size:19.5px;line-height:19.5px;color:#000;font-weight:400;white-space:pre;transform:scaleX(1.0299);transform-origin:0 0;">pending</div>
<div style="position:absolute;left:274.30px;top:433.12px;font-family:'Liberation Sans', sans-serif;font-size:19.5px;line-height:19.5px;color:#000;font-weight:400;white-space:pre;transform:scaleX(1.0146);transform-origin:0 0;">49.98</div>
<div style="position:absolute;left:409.00px;top:433.12px;font-family:'Liberation Sans', sans-serif;font-size:19.5px;line-height:19.5px;color:#000;font-weight:400;white-space:pre;">0</div>
<div style="position:absolute;left:505.00px;top:433.12px;font-family:'Liberation Sans', sans-serif;font-size:19.5px;line-height:19.5px;color:#000;font-weight:400;white-space:pre;">0</div>
<div style="position:absolute;left:601.00px;top:433.12px;font-family:'Liberation Sans', sans-serif;font-size:19.5px;line-height:19.5px;color:#000;font-weight:400;white-space:pre;">0</div>
<div style="position:absolute;left:810.69px;top:433.12px;font-family:'Liberation Sans', sans-serif;font-size:19.5px;line-height:19.5px;color:#000;font-weight:400;white-space:pre;transform:scaleX(1.0085);transform-origin:0 0;">2025-10-15T07:07:03.459Z</div>
<div style="position:absolute;left:42.66px;top:462.12px;font-family:'Liberation Sans', sans-serif;font-size:19.5px;line-height:19.5px;color:#000;font-weight:400;white-space:pre;transform:scaleX(1.0371);transform-origin:0 0;">paid</div>
<div style="position:absolute;left:138.67px;top:462.12px;font-family:'Liberation Sans', sans-serif;font-size:19.5px;line-height:19.5px;color:#000;font-weight:400;white-space:pre;transform:scaleX(1.0299);transform-origin:0 0;">pending</div>
<div style="position:absolute;left:273.26px;top:462.12px;font-family:'Liberation Sans', sans-serif;font-size:19.5px;line-height:19.5px;color:#000;font-weight:400;white-space:pre;transform:scaleX(1.0362);transform-origin:0 0;">24.99</div>
<div style="position:absolute;left:409.00px;top:462.12px;font-family:'Liberation Sans', sans-serif;font-size:19.5px;line-height:19.5px;color:#000;font-weight:400;white-space:pre;">0</div>
<div style="position:absolute;left:505.00px;top:462.12px;font-family:'Liberation Sans', sans-serif;font-size:19.5px;line-height:19.5px;color:#000;font-weight:400;white-space:pre;">0</div>
<div style="position:absolute;left:601.00px;top:462.12px;font-family:'Liberation Sans', sans-serif;font-size:19.5px;line-height:19.5px;color:#000;font-weight:400;white-space:pre;">0</div>
<div style="position:absolute;left:810.69px;top:462.12px;font-family:'Liberation Sans', sans-serif;font-size:19.5px;line-height:19.5px;color:#000;font-weight:400;white-space:pre;transform:scaleX(1.0085);transform-origin:0 0;">2025-10-17T09:12:38.051Z</div>
<div style="position:absolute;left:42.66px;top:491.12px;font-family:'Liberation Sans', sans-serif;font-size:19.5px;line-height:19.5px;color:#000;font-weight:400;white-space:pre;transform:scaleX(1.0371);transform-origin:0 0;">paid</div>
<div style="position:absolute;left:138.67px;top:491.12px;font-family:'Liberation Sans', sans-serif;font-size:19.5px;line-height:19.5px;color:#000;font-weight:400;white-space:pre;transform:scaleX(1.0299);transform-origin:0 0;">pending</div>
<div style="position:absolute;left:273.67px;top:491.12px;font-family:'Liberation Sans', sans-serif;font-size:19.5px;line-height:19.5px;color:#000;font-weight:400;white-space:pre;transform:scaleX(1.0277);transform-origin:0 0;">15.99</div>
<div style="position:absolute;left:409.00px;top:491.12px;font-family:'Liberation Sans', sans-serif;font-size:19.5px;line-height:19.5px;color:#000;font-weight:400;white-space:pre;">0</div>
<div style="position:absolute;left:505.00px;top:491.12px;font-family:'Liberation Sans', sans-serif;font-size:19.5px;line-height:19.5px;color:#000;font-weight:400;white-space:pre;">0</div>
<div style="position:absolute;left:601.00px;top:491.12px;font-family:'Liberation Sans', sans-serif;font-size:19.5px;line-height:19.5px;color:#000;font-weight:400;white-space:pre;">0</div>
<div style="position:absolute;left:810.69px;top:491.12px;font-family:'Liberation Sans', sans-serif;font-size:19.5px;line-height:19.5px;color:#000;font-weight:400;white-space:pre;transform:scaleX(1.0085);transform-origin:0 0;">2025-10-21T09:15:43.417Z</div>
<div style="position:absolute;left:1400px;top:370px;width:32px;height:557px;background:#ebebeb;"></div>
<div style="position:absolute;left:1403px;top:369px;width:25px;height:558px;background:#f7f7f7;border-radius:12px;"></div>
<div style="position:absolute;left:1410px;top:395px;width:12px;height:458px;background:#707070;border-radius:6px;"></div>
<svg style="position:absolute;left:1408px;top:375px" width="16" height="14"><path d="M8.2 2.8 L14 11.2 L2.4 11.2 Z" fill="#707070" stroke="#707070" stroke-width="2.4" stroke-linejoin="round"/></svg>
<svg style="position:absolute;left:1408px;top:910px" width="16" height="13"><path d="M8.2 11.2 L14 2.8 L2.4 2.8 Z" fill="#707070" stroke="#707070" stroke-width="2.4" stroke-linejoin="round"/></svg>
<div style="position:absolute;left:1431px;top:370px;width:1px;height:605px;background:#d6d6d6;"></div>
<div style="position:absolute;left:1432px;top:370px;width:488px;height:605px;background:#efefef;"></div>
<div style="position:absolute;left:1443px;top:383px;width:465px;height:577px;background:#ffffff;"></div>
<div style="position:absolute;left:150px;top:927px;width:20px;height:10px;background:#ffffff;"></div>
<div style="position:absolute;left:515px;top:927px;width:20px;height:10px;background:#ffffff;"></div>
<div style="position:absolute;left:0px;top:927px;width:166px;height:48px;background:#e3e3e3;border-radius:0 8px 0 0;"></div>
<div style="position:absolute;left:521px;top:927px;width:910px;height:48px;background:#e3e3e3;border-radius:8px 0 0 0;"></div>
<div style="position:absolute;left:0px;top:955px;width:1431px;height:20px;background:#e3e3e3;"></div>
<div style="position:absolute;left:166px;top:927px;width:355px;height:41px;background:#ffffff;border-radius:0 0 8px 8px;"></div>
<div style="position:absolute;left:177.27px;top:937.08px;font-family:'Liberation Sans', sans-serif;font-size:20.5px;line-height:20.5px;color:#1f1f1f;font-weight:400;white-space:pre;transform:scaleX(1.0334);transform-origin:0 0;-webkit-text-stroke:0.6px #1f1f1f;">b17d680c-af2d-4747-a5fd-eac1e9b</div>
<div style="position:absolute;left:178px;top:962px;width:331px;height:3px;background:#137b41;border-radius:1px;"></div>
<div style="position:absolute;left:527px;top:935px;width:1px;height:30px;background:#cfcfcf;"></div>
<svg style="position:absolute;left:30px;top:938px" width="70" height="24" fill="none" stroke="#8a8a8a" stroke-width="1.6"><path d="M14 4 L6 12 L14 20"/><path d="M55 4 L63 12 L55 20"/></svg>
<svg style="position:absolute;left:588px;top:938px" width="24" height="24" fill="none" stroke="#333" stroke-width="1.5"><path d="M11.5 4 V21 M3 12.5 H20"/></svg>
<div style="position:absolute;left:862px;top:944px;width:4px;height:4px;background:#333;border-radius:50%;"></div>
<div style="position:absolute;left:862px;top:950px;width:4px;height:4px;background:#333;border-radius:50%;"></div>
<div style="position:absolute;left:862px;top:956px;width:4px;height:4px;background:#333;border-radius:50%;"></div>
<div style="position:absolute;left:889px;top:937px;width:514px;height:25px;background:#f7f7f7;border-radius:12px;"></div>
<div style="position:absolute;left:1137px;top:944px;width:240px;height:12px;background:#707070;border-radius:6px;"></div>
<svg style="position:absolute;left:894px;top:942px" width="14" height="16"><path d="M3 8 L11.5 2.3 L11.5 13.7 Z" fill="#707070" stroke="#707070" stroke-width="2.2" stroke-linejoin="round"/></svg>
<svg style="position:absolute;left:1383px;top:942px" width="14" height="16"><path d="M11.5 8 L3 2.3 L3 13.7 Z" fill="#707070" stroke="#707070" stroke-width="2.2" stroke-linejoin="round"/></svg>
<div style="position:absolute;left:0px;top:975px;width:1920px;height:33px;background:#f4f4f4;"></div>
<div style="position:absolute;left:17.11px;top:984.48px;font-family:'Liberation Sans', sans-serif;font-size:16.5px;line-height:16.5px;color:#3b3b3b;font-weight:400;white-space:pre;transform:scaleX(0.8936);transform-origin:0 0;">Ready</div>
<div style="position:absolute;left:115.80px;top:984.48px;font-family:'Liberation Sans', sans-serif;font-size:16.5px;line-height:16.5px;color:#3b3b3b;font-weight:400;white-space:pre;transform:scaleX(0.9243);transform-origin:0 0;">Accessibility: Unavailable</div>
<div style="position:absolute;left:1474px;top:975px;width:60px;height:33px;background:#e2e2e2;"></div>
<div style="position:absolute;left:1868.55px;top:984.48px;font-family:'Liberation Sans', sans-serif;font-size:16.5px;line-height:16.5px;color:#3b3b3b;font-weight:400;white-space:pre;transform:scaleX(0.9512);transform-origin:0 0;">100%</div>
<div style="position:absolute;left:0px;top:1008px;width:1920px;height:72px;background:#1f1f1f;"></div>
<div style="position:absolute;left:0px;top:1008px;width:1920px;height:1px;background:#3c3c3c;"></div>
<div style="position:absolute;left:77.00px;top:1022.27px;font-family:'Liberation Sans', sans-serif;font-size:18.5px;line-height:18.5px;color:#ffffff;font-weight:400;white-space:pre;">Air: Moderate</div>
<div style="position:absolute;left:74.97px;top:1045.53px;font-family:'Liberation Sans', sans-serif;font-size:18.5px;line-height:18.5px;color:#cfcfcf;font-weight:400;white-space:pre;transform:scaleX(1.0278);transform-origin:0 0;">Now</div>
<div style="position:absolute;left:575px;top:1022px;width:326px;height:44px;background:#f0f0f0;border-radius:22px;"></div>
<div style="position:absolute;left:628.05px;top:1034.65px;font-family:'Liberation Sans', sans-serif;font-size:21px;line-height:21px;color:#5a5a5a;font-weight:400;white-space:pre;transform:scaleX(0.9531);transform-origin:0 0;">Search</div>
<div style="position:absolute;left:1305px;top:1015px;width:53px;height:58px;background:#2e2e2e;border-radius:6px;"></div>
<div style="position:absolute;left:1614.03px;top:1025.55px;font-family:'Liberation Sans', sans-serif;font-size:17px;line-height:17px;color:#ffffff;font-weight:400;white-space:pre;transform:scaleX(0.9714);transform-origin:0 0;">ENG</div>
<div style="position:absolute;left:1621.80px;top:1048.55px;font-family:'Liberation Sans', sans-serif;font-size:17px;line-height:17px;color:#ffffff;font-weight:400;white-space:pre;transform:scaleX(1.2000);transform-origin:0 0;">IN</div>
<div style="position:absolute;left:1846.95px;top:1023.55px;font-family:'Liberation Sans', sans-serif;font-size:17px;line-height:17px;color:#ffffff;font-weight:400;white-space:pre;transform:scaleX(1.0488);transform-origin:0 0;">10:56</div>
<div style="position:absolute;left:1796.88px;top:1048.55px;font-family:'Liberation Sans', sans-serif;font-size:17px;line-height:17px;color:#ffffff;font-weight:400;white-space:pre;transform:scaleX(1.1205);transform-origin:0 0;">11-11-2025</div>
<svg style="position:absolute;left:0;top:0" width="1920" height="1080" viewBox="0 0 1920 1080" fill="none"><rect x="27" y="24" width="19.5" height="24" rx="2.5" fill="#1b7631"/><path d="M29.5 24 H36 V32 H27 V26.5 A2.5 2.5 0 0 1 29.5 24 Z" fill="#63d35b"/><path d="M36 24 H46.5 V32 H36 Z" fill="#b4e96d"/><path d="M36 32 H46.5 V45.5 A2.5 2.5 0 0 1 44 48 H36 Z" fill="#1f7a2e"/><rect x="24" y="31.7" width="12.3" height="12.6" rx="2.2" fill="#0d5c30"/><path d="M27.3 34.8 L33 41.6 M33 34.8 L27.3 41.6" stroke="#fff" stroke-width="2.3"/><path d="M231.5 24.5 H253 V45.5 H235 L231.5 42 Z" fill="#fbfbfb"/><path d="M240 45.5 H235 L231.5 42 V24.5 H253 V31.5" stroke="#333333" stroke-width="1.6" fill="none"/><path d="M236.3 24.5 V33 H243 M248.3 24.5 V31.5 M237.8 45.5 V38.5 H240.5" stroke="#333333" stroke-width="1.6" fill="none"/><circle cx="247.5" cy="41.5" r="8" fill="#e8e8e8"/><path d="M241.8 40 A6 6 0 0 1 252.5 37.5" stroke="#2aa548" stroke-width="1.8" fill="none"/><path d="M253.3 33.3 V38.8 H248" stroke="#2aa548" stroke-width="1.8" fill="none"/><path d="M253.2 43 A6 6 0 0 1 242.5 45.5" stroke="#2aa548" stroke-width="1.8" fill="none"/><path d="M241.7 49.7 V44.2 H247" stroke="#2aa548" stroke-width="1.8" fill="none"/><path d="M275.8 24.5 V33.8 H285.6 M276.5 33 L282 27.5 A8.6 8.6 0 0 1 294.6 38.6 L284 47.8" stroke="#333333" stroke-width="1.6" fill="none"/><path d="M306 34 L310.0 38.5 L314 34" stroke="#333333" stroke-width="1.5" fill="none" stroke-linecap="round" stroke-linejoin="round"/><path d="M353.5 24.5 V33.8 H343.7 M352.8 33 L347.3 27.5 A8.6 8.6 0 0 0 334.7 38.6 L345.3 47.8" stroke="#9a9a9a" stroke-width="1.6" fill="none"/><path d="M362 34 L366.0 38.5 L370 34" stroke="#b5b5b5" stroke-width="1.5" fill="none" stroke-linecap="round" stroke-linejoin="round"/><path d="M395 32 H405" stroke="#333333" stroke-width="1.6"/><path d="M395.5 36 L400.0 41 L404.5 36" stroke="#333333" stroke-width="1.7" fill="none" stroke-linecap="round" stroke-linejoin="round"/><path d="M1015 34 L1022.0 41 L1029 34" stroke="#262626" stroke-width="1.6" fill="none" stroke-linecap="round" stroke-linejoin="round"/><path d="M1732 35.5 H1748" stroke="#262626" stroke-width="1.4"/><rect x="1805.5" y="31" width="12" height="12" rx="2" stroke="#262626" stroke-width="1.4" fill="none"/><path d="M1808.5 28.5 H1817 A3 3 0 0 1 1820 31.5 V40" stroke="#262626" stroke-width="1.4" fill="none"/><path d="M1876 29 L1890 43 M1890 29 L1876 43" stroke="#262626" stroke-width="1.4"/><path d="M1519.5 25.5 H1534.5 L1539 32 L1527 46 L1515 32 Z M1515 32 H1539 M1523.5 25.5 L1521.5 32 L1527 46 L1532.5 32 L1530.5 25.5" stroke="#fff" stroke-width="1.5" fill="none" stroke-linejoin="round"/><path d="M922.5 99 C916 93,916.5 84.5,927 84.5 C937.5 84.5,938 93,931.5 99 V102 H922.5 Z M923.5 104.5 H930.5 M924.5 107 H929.5" stroke="#333333" stroke-width="1.5" fill="none"/><path d="M1659 87 H1673.5 V97.5 H1664.5 L1660 101.5 V97.5 H1659 Z" stroke="#333333" stroke-width="1.5" fill="none" stroke-linejoin="round"/><path d="M1804.5 92 V102.5 H1820 V98" stroke="#fff" stroke-width="1.5" fill="none"/><path d="M1808 99 C1808 93,1812 90.5,1818 90.5 M1815 86.5 L1820.5 90.5 L1815 94.5" stroke="#fff" stroke-width="1.5" fill="none" stroke-linejoin="round"/><path d="M1887 92.5 L1891.0 97.0 L1895 92.5" stroke="#fff" stroke-width="1.5" fill="none" stroke-linecap="round" stroke-linejoin="round"/><rect x="45.2" y="136.8" width="29.8" height="34" fill="#fdf6e6" stroke="#e8821e" stroke-width="1.6"/><rect x="47.5" y="139" width="25" height="29.5" fill="#f8f8f8" stroke="#fde3a8" stroke-width="1.2"/><path d="M51.5 141 V134.5 H56 C56 130,65 130,65 134.5 H70 V141 Z" fill="#f6f6f6" stroke="#7a7a7a" stroke-width="1.5"/><rect x="65.2" y="148.8" width="19.5" height="25" fill="#fafafa" stroke="#333333" stroke-width="1.6"/><path d="M56.5 213.5 L60.5 218.0 L64.5 213.5" stroke="#333333" stroke-width="1.6" fill="none" stroke-linecap="round" stroke-linejoin="round"/><path d="M108.5 129 L116 147.5 M117 129 L109.5 147.5" stroke="#333333" stroke-width="1.3"/><circle cx="108.5" cy="150" r="2.6" stroke="#1e7fd0" stroke-width="1.5" fill="none"/><circle cx="117.5" cy="150" r="2.6" stroke="#1e7fd0" stroke-width="1.5" fill="none"/><path d="M110 188.5 H101.8 V168.8 H110.5 L113 171" stroke="#333333" stroke-width="1.5" fill="none"/><path d="M110.8 191.2 V172.8 H120.5 L124.2 176.8 V191.2 Z M120.5 172.8 V176.8 H124.2 M114 183 H121 M114 186.2 H121" stroke="#333333" stroke-width="1.5" fill="#fff"/><path d="M144 178.5 L148.0 183.0 L152 178.5" stroke="#333333" stroke-width="1.6" fill="none" stroke-linecap="round" stroke-linejoin="round"/><path d="M103.5 218.5 L117.8 222.5 L111.5 228.5 Z" fill="#fbd29a"/><path d="M111.5 212.3 L102 217.3 L111.5 228.8 L119.8 220.3 M103 218.2 L118 222.3" stroke="#e07a1a" stroke-width="1.5" fill="none" stroke-linejoin="round"/><path d="M111.5 212 L113.8 210.3 L116.6 213.1 L122.3 207.4 C123.5 206.2,126 207,125.2 208.9 L119.5 214.8 L121.6 216.9 C122.2 217.7,121.6 218.6,119.8 220.4 Z" stroke="#333333" stroke-width="1.5" fill="#fff" stroke-linejoin="round"/><path d="M160.5 257.5 V246.5 H171.5" stroke="#333333" stroke-width="1.3" fill="none"/><path d="M163.5 249.5 L170.5 256.5 M170.5 251.5 V256.5 H165.5" stroke="#333333" stroke-width="1.3" fill="none"/><rect x="505.5" y="240.5" width="23" height="23" rx="6" stroke="#8a8a8a" stroke-width="1" stroke-dasharray="3 3" fill="#f3f3f3"/><rect x="810.5" y="240.5" width="23" height="23" rx="6" stroke="#8a8a8a" stroke-width="1" stroke-dasharray="3 3" fill="#f3f3f3"/><rect x="1052.5" y="240.5" width="23" height="23" rx="6" stroke="#8a8a8a" stroke-width="1" stroke-dasharray="3 3" fill="#f3f3f3"/><path d="M511.5 257.5 V246.5 H522.5" stroke="#333333" stroke-width="1.3" fill="none"/><path d="M514.5 249.5 L521.5 256.5 M521.5 251.5 V256.5 H516.5" stroke="#333333" stroke-width="1.3" fill="none"/><path d="M816.5 257.5 V246.5 H827.5" stroke="#333333" stroke-width="1.3" fill="none"/><path d="M819.5 249.5 L826.5 256.5 M826.5 251.5 V256.5 H821.5" stroke="#333333" stroke-width="1.3" fill="none"/><path d="M1058.5 257.5 V246.5 H1069.5" stroke="#333333" stroke-width="1.3" fill="none"/><path d="M1061.5 249.5 L1068.5 256.5 M1068.5 251.5 V256.5 H1063.5" stroke="#333333" stroke-width="1.3" fill="none"/><path d="M358 151 L362.25 155.8 L366.5 151" stroke="#333333" stroke-width="1.6" fill="none" stroke-linecap="round" stroke-linejoin="round"/><path d="M426 151 L430.25 155.8 L434.5 151" stroke="#333333" stroke-width="1.6" fill="none" stroke-linecap="round" stroke-linejoin="round"/><path d="M450.5 161 L458 142.5 L465.5 161 M453.3 154.5 H462.7" stroke="#333333" stroke-width="1.6" fill="none"/><path d="M466.5 147 L469.8 143.5 L473 147" stroke="#1e7fd0" stroke-width="1.6" fill="none"/><path d="M492 161 L498.3 146 L504.6 161 M494.4 155.8 H502.2" stroke="#333333" stroke-width="1.6" fill="none"/><path d="M506 142.5 L509.3 146 L512.6 142.5" stroke="#1e7fd0" stroke-width="1.6" fill="none"/><path d="M203.5 192.8 H208.5 C214 192.8,214 199,208.8 199.3 C215 199.5,215 206.5,208.5 206.5 H203.5 Z M203.5 199.3 H208.8" stroke="#333333" stroke-width="2.4" fill="none" stroke-linejoin="round"/><path d="M245 192.8 H253.5 M241 206.5 H249.5 M249.3 192.8 L245.2 206.5" stroke="#333333" stroke-width="1.5" fill="none"/><path d="M279.5 192.3 V200 C279.5 206,290.8 206,290.8 200 V192.3 M278.5 209.2 H291.8" stroke="#333333" stroke-width="1.6" fill="none"/><path d="M310.5 199 L314.5 203.5 L318.5 199" stroke="#333333" stroke-width="1.6" fill="none" stroke-linecap="round" stroke-linejoin="round"/><rect x="339.5" y="189.5" width="22" height="20" stroke="#333333" stroke-width="1.3" stroke-dasharray="1.3 1.7" fill="none"/><path d="M350.5 190 V209 M340 199.5 H361" stroke="#333333" stroke-width="1.3" stroke-dasharray="1.3 1.7"/><path d="M339 210.8 H362" stroke="#333333" stroke-width="1.6"/><path d="M375.5 199 L379.5 203.5 L383.5 199" stroke="#333333" stroke-width="1.6" fill="none" stroke-linecap="round" stroke-linejoin="round"/><path d="M413 193 L408 200.5 L415 206 L424 198 Z M413 193 V189.8 A1.6 1.6 0 0 1 416.2 189.8 V196" stroke="#333333" stroke-width="1.5" fill="none" stroke-linejoin="round"/><path d="M419.5 196.5 C423 193,426.5 195,426.5 199 V203.5" stroke="#1e5fa8" stroke-width="2.2" fill="none"/><rect x="404" y="206.7" width="23.7" height="6.2" fill="#eef000"/><path d="M440.5 199 L444.5 203.5 L448.5 199" stroke="#333333" stroke-width="1.6" fill="none" stroke-linecap="round" stroke-linejoin="round"/><path d="M471 205 L477.3 189.8 L483.6 205 M473.4 199.3 H481.2" stroke="#333333" stroke-width="1.6" fill="none"/><rect x="465" y="207" width="24" height="6" fill="#e81020"/><path d="M501.5 199 L505.75 203.5 L510.0 199" stroke="#333333" stroke-width="1.6" fill="none" stroke-linecap="round" stroke-linejoin="round"/><path d="M548.3 141.7 H569.7" stroke="#333333" stroke-width="1.4"/><path d="M551.7 147.7 H566" stroke="#333333" stroke-width="1.4"/><path d="M548.3 153.75 H569.7" stroke="#333333" stroke-width="1.4"/><path d="M587.3 146.1 H608.7" stroke="#333333" stroke-width="1.4"/><path d="M590.6 152 H605" stroke="#333333" stroke-width="1.4"/><path d="M587.3 158.1 H608.7" stroke="#333333" stroke-width="1.4"/><rect x="619.5" y="135.5" width="35" height="35" rx="6" fill="#ebebeb" stroke="#707070" stroke-width="1"/><path d="M626.3 152 H647.7" stroke="#333333" stroke-width="1.4"/><path d="M629.6 158 H644" stroke="#333333" stroke-width="1.4"/><path d="M626.3 164.1 H647.7" stroke="#333333" stroke-width="1.4"/><text x="0" y="0" transform="translate(669.5 160) rotate(-45)" font-family="Liberation Sans" font-size="16" fill="#333333">ab</text><path d="M672.5 163.5 L687.5 148.5 M681.5 148 H688 V154.5" stroke="#2e8fd6" stroke-width="1.5" fill="none"/><path d="M697 151 L701.0 155.5 L705 151" stroke="#333333" stroke-width="1.6" fill="none" stroke-linecap="round" stroke-linejoin="round"/><path d="M548.3 191 H569.6999999999999" stroke="#333333" stroke-width="1.4"/><path d="M548.3 203.1 H569.6999999999999" stroke="#333333" stroke-width="1.4"/><path d="M548.3 197.2 H563.5" stroke="#333333" stroke-width="1.4"/><path d="M548.3 209.2 H563.5" stroke="#333333" stroke-width="1.4"/><path d="M587.3 191 H608.6999999999999" stroke="#333333" stroke-width="1.4"/><path d="M587.3 203.1 H608.6999999999999" stroke="#333333" stroke-width="1.4"/><path d="M590.5999999999999 197.2 H605.5" stroke="#333333" stroke-width="1.4"/><path d="M590.5999999999999 209.2 H605.5" stroke="#333333" stroke-width="1.4"/><path d="M626.3 191 H647.6999999999999" stroke="#333333" stroke-width="1.4"/><path d="M626.3 203.1 H647.6999999999999" stroke="#333333" stroke-width="1.4"/><path d="M632.5 197.2 H647.6999999999999" stroke="#333333" stroke-width="1.4"/><path d="M632.5 209.2 H647.6999999999999" stroke="#333333" stroke-width="1.4"/><path d="M665.5 191 H686.9" stroke="#333333" stroke-width="1.4"/><path d="M677.5 197.2 H686.9" stroke="#333333" stroke-width="1.4"/><path d="M677.5 203.1 H686.9" stroke="#333333" stroke-width="1.4"/><path d="M665.5 209.2 H686.9" stroke="#333333" stroke-width="1.4"/><path d="M675.5 200.2 H666.5 M670 196.7 L666.5 200.2 L670 203.7" stroke="#2e8fd6" stroke-width="1.5" fill="none"/><path d="M704.4 191 H726" stroke="#333333" stroke-width="1.4"/><path d="M717 197.2 H726" stroke="#333333" stroke-width="1.4"/><path d="M717 203.1 H726" stroke="#333333" stroke-width="1.4"/><path d="M704.4 209.2 H726" stroke="#333333" stroke-width="1.4"/><path d="M704.5 200.2 H713.5 M710 196.7 L713.5 200.2 L710 203.7" stroke="#2e8fd6" stroke-width="1.5" fill="none"/><text x="761.5" y="152.3" font-family="Liberation Sans" font-size="14.5" fill="#333333" textLength="17.5" lengthAdjust="spacingAndGlyphs">ab</text><text x="761.5" y="163.5" font-family="Liberation Sans" font-size="14.5" fill="#333333">c</text><path d="M781 153 C782.5 157.5,779 160.5,771.5 160.2 M775 156.5 L771 160.2 L775 164" stroke="#2e8fd6" stroke-width="1.6" fill="none"/><rect x="759" y="194" width="20.5" height="12.5" fill="#dcebf8"/><rect x="758.8" y="189.8" width="21" height="20.8" stroke="#333333" stroke-width="1.5" fill="none"/><path d="M759 194 H780 M759 206.3 H780 M769.3 190 V194 M769.3 206.3 V210.5" stroke="#333333" stroke-width="1.3"/><path d="M759 194 V206.3 M779.8 194 V206.3" stroke="#2e8fd6" stroke-width="1.6"/><path d="M761.5 200.3 H777.5 M764.5 197.3 L761.5 200.3 L764.5 203.3 M774.5 197.3 L777.5 200.3 L774.5 203.3" stroke="#2e8fd6" stroke-width="1.5" fill="none"/><path d="M801.2 199.2 L805.2 203.7 L809.2 199.2" stroke="#333333" stroke-width="1.6" fill="none" stroke-linecap="round" stroke-linejoin="round"/><rect x="1089.5" y="123.5" width="250" height="35" rx="8" stroke="#7a7a7a" stroke-width="1" stroke-dasharray="6 4"/><rect x="1524.5" y="162.5" width="58" height="35" rx="6" stroke="#7a7a7a" stroke-width="1" stroke-dasharray="6 4"/><rect x="1758.5" y="123.5" width="70" height="113" rx="8" stroke="#7a7a7a" stroke-width="1" stroke-dasharray="6 4"/><path d="M1052 151 L1056.25 155.5 L1060.5 151" stroke="#333333" stroke-width="1.6" fill="none" stroke-linecap="round" stroke-linejoin="round"/><rect x="853.8" y="194.2" width="22.2" height="13" stroke="#333333" stroke-width="1.6" fill="#fff"/><text x="856.5" y="204.5" font-family="Liberation Sans" font-size="10" font-weight="700" fill="#333333">CO</text><path d="M866 203 V210.5 A5.5 2.4 0 0 0 877 210.5 V203" fill="#fde9c9" stroke="#e0791c" stroke-width="1.5"/><ellipse cx="871.5" cy="203" rx="5.5" ry="2.4" fill="#fde9c9" stroke="#e0791c" stroke-width="1.5"/><path d="M866 206.8 A5.5 2.4 0 0 0 877 206.8" stroke="#e0791c" stroke-width="1.3" fill="none"/><path d="M889 199.5 L893.0 204.0 L897 199.5" stroke="#333333" stroke-width="1.6" fill="none" stroke-linecap="round" stroke-linejoin="round"/><circle cx="919.3" cy="195.5" r="3.7" stroke="#333333" stroke-width="1.6"/><circle cx="932.3" cy="206.5" r="3.7" stroke="#333333" stroke-width="1.6"/><path d="M933.5 191 L919.5 211.5" stroke="#333333" stroke-width="1.6"/><path d="M965.5 193 C970 193,972 196.5,971 200.5 C970 205,966.5 208.5,961.5 210.5 L961 209 C964 207,966 204.5,966 202 C962 202,960.3 200,960.3 197.5 C960.3 195,962.5 193,965.5 193 Z" fill="#333333"/><path d="M1009.5 195.5 H997 M1001 191.5 L997 195.5 L1001 199.5" stroke="#2e8fd6" stroke-width="1.5" fill="none"/><text x="1011" y="199.5" font-family="Liberation Sans" font-size="12" fill="#333333">0</text><text x="997.5" y="211.5" font-family="Liberation Sans" font-size="12" fill="#333333">.00</text><text x="1035.5" y="199.5" font-family="Liberation Sans" font-size="12" fill="#333333">.00</text><text x="1044" y="211.5" font-family="Liberation Sans" font-size="12" fill="#333333">.0</text><path d="M1035.5 206.5 H1048 M1044 202.5 L1048 206.5 L1044 210.5" stroke="#2e8fd6" stroke-width="1.5" fill="none"/><rect x="1095" y="130.4" width="24" height="20.8" fill="#4f4f4f"/><rect x="1096.8" y="132.6" width="2.6" height="3.8" fill="#fff"/><rect x="1096.8" y="138.8" width="2.6" height="5" fill="#fff"/><rect x="1096.8" y="146" width="2.6" height="3.5" fill="#fff"/><rect x="1108.7" y="132.6" width="4.2" height="3.8" fill="#fff"/><rect x="1105.8" y="138.8" width="7.1" height="5" fill="#fff"/><rect x="1114.5" y="132.6" width="3.1" height="3.8" fill="#fff"/><rect x="1114.5" y="138.8" width="3.1" height="5" fill="#fff"/><rect x="1114.5" y="146" width="3.1" height="3.5" fill="#fff"/><rect x="1110.5" y="146" width="2.4" height="3.5" fill="#fff"/><path d="M1315 140 L1319.0 144.5 L1323 140" stroke="#555" stroke-width="1.6" fill="none" stroke-linecap="round" stroke-linejoin="round"/><rect x="1103" y="177" width="15.5" height="13" fill="#8cbdea"/><path d="M1095.8 190.2 V170.3 H1118.3 V190.2 M1095.8 177 H1118.3 M1095.8 183.5 H1104 M1103.5 170.3 V190 M1111 170.3 V177" stroke="#333333" stroke-width="1.4" fill="none"/><path d="M1103 177 V190.2 H1118.3 V177" stroke="#1f6fc5" stroke-width="1.4" fill="none"/><path d="M1117.5 175.5 L1106 186" stroke="#333333" stroke-width="3.6" stroke-linecap="round"/><path d="M1117.5 175.5 L1106 186" stroke="#fff" stroke-width="1.4" stroke-linecap="round"/><path d="M1106.5 185.5 C1104 185,1102 187,1101.5 190.5 C1104.5 191,1107.5 190,1108 187.5 Z" fill="#1f6fc5" stroke="#1f6fc5" stroke-width="1"/><path d="M1255 181 L1259.25 185.5 L1263.5 181" stroke="#333333" stroke-width="1.6" fill="none" stroke-linecap="round" stroke-linejoin="round"/><rect x="1100" y="213.5" width="18.5" height="15.5" fill="#8cbdea"/><rect x="1095.8" y="209.2" width="22.6" height="20.4" stroke="#333333" stroke-width="1.4" fill="none"/><path d="M1095.8 213.5 H1118.4 M1100 209.2 V229.6" stroke="#333333" stroke-width="1.3"/><path d="M1100 213.5 V229 M1100 213.5 H1118.3" stroke="#1f6fc5" stroke-width="1.3"/><path d="M1117.5 214 L1106 225" stroke="#333333" stroke-width="3.6" stroke-linecap="round"/><path d="M1117.5 214 L1106 225" stroke="#fff" stroke-width="1.4" stroke-linecap="round"/><path d="M1106.5 224.5 C1104 224,1102 226,1101.5 229.5 C1104.5 230,1107.5 229,1108 226.5 Z" fill="#1f6fc5" stroke="#1f6fc5" stroke-width="1"/><path d="M1209 219 L1213.25 223.5 L1217.5 219" stroke="#333333" stroke-width="1.6" fill="none" stroke-linecap="round" stroke-linejoin="round"/><rect x="1378.5" y="136.8" width="15" height="8" fill="#8cbdea" stroke="#1f6fc5" stroke-width="1.4"/><path d="M1370.8 131 H1393.6 V151 H1370.8 Z M1378.5 131 V136 M1386 131 V136 M1378.5 145.5 V151 M1386 145.5 V151 M1371 136.2 H1378 M1371 145.5 H1393" stroke="#333333" stroke-width="1.4" fill="none"/><path d="M1386 140.8 H1371.5 M1375.5 136.5 L1371.2 140.8 L1375.5 145" stroke="#fff" stroke-width="3.5" fill="none"/><path d="M1386 140.8 H1371.5 M1375.5 136.5 L1371.2 140.8 L1375.5 145" stroke="#2e8fd6" stroke-width="1.5" fill="none"/><path d="M1370.8 175.5 V170 H1393.6 V175.5 M1370.8 184.5 V190 H1393.6 V184.5 M1378.5 170 V175.5 M1386 170 V175.5 M1378.5 184.5 V190 M1386 184.5 V190 M1370.8 175.5 H1374.5 M1370.8 184.5 H1374.5 M1384 175.5 H1393.6 M1384 184.5 H1393.6" stroke="#333333" stroke-width="1.4" fill="none"/><rect x="1374.5" y="176" width="8.5" height="8" fill="#8cbdea" stroke="#1f6fc5" stroke-width="1.5"/><path d="M1386 176 L1393 183.5 M1393 176 L1386 183.5" stroke="#e8413a" stroke-width="1.6"/><path d="M1374.5 209.5 H1390.5 M1374.5 207 V212 M1390.5 207 V212" stroke="#2e8fd6" stroke-width="1.5"/><path d="M1370.8 214 V230 H1393.6 V214 M1370.8 224.5 H1393.6 M1378.5 224.5 V230 M1386 224.5 V230 M1370.8 219 H1376" stroke="#333333" stroke-width="1.4" fill="none"/><rect x="1376.5" y="216" width="11.5" height="8.5" fill="#8cbdea" stroke="#1f6fc5" stroke-width="1.5"/><path d="M1471 140 L1475.0 144.5 L1479 140" stroke="#333333" stroke-width="1.6" fill="none" stroke-linecap="round" stroke-linejoin="round"/><path d="M1477 179 L1481.0 183.5 L1485 179" stroke="#333333" stroke-width="1.6" fill="none" stroke-linecap="round" stroke-linejoin="round"/><path d="M1463 217.5 L1467.0 222.0 L1471 217.5" stroke="#333333" stroke-width="1.6" fill="none" stroke-linecap="round" stroke-linejoin="round"/><path d="M1549.5 134.5 V131 H1532.5 L1541.5 141 L1532.5 151 H1549.5 V147.5" stroke="#333333" stroke-width="1.6" fill="none" stroke-linejoin="miter"/><path d="M1572 139.5 L1576.0 144.0 L1580 139.5" stroke="#333333" stroke-width="1.6" fill="none" stroke-linecap="round" stroke-linejoin="round"/><rect x="1529.8" y="169.9" width="22.6" height="19.8" stroke="#555" stroke-width="1.4" fill="none"/><path d="M1530 172.9 H1552.3 M1540.8 175.5 V186.5 M1536.5 182 L1540.8 186.5 L1545 182" stroke="#555" stroke-width="1.4" fill="none"/><path d="M1562 179.5 L1566.0 184.0 L1570 179.5" stroke="#555" stroke-width="1.6" fill="none" stroke-linecap="round" stroke-linejoin="round"/><path d="M1543.7 208.5 L1551.2 215.6 L1537.3 229.7 L1529.9 222 Z" fill="#fff" stroke="#8e2c9e" stroke-width="1.6" stroke-linejoin="round"/><path d="M1535.1 216.8 L1542.3 224 L1537.3 229.7 L1529.9 222 Z" fill="#d490e0" stroke="#8e2c9e" stroke-width="1.6" stroke-linejoin="round"/><path d="M1562 217.5 L1566.0 222.0 L1570 217.5" stroke="#333333" stroke-width="1.6" fill="none" stroke-linecap="round" stroke-linejoin="round"/><path d="M1608 149.5 L1614.5 131.8 L1621 149.5 M1610.3 143.5 H1618.7" stroke="#2e8fd6" stroke-width="1.6" fill="none"/><path d="M1608 153.5 H1620 L1608 169.5 H1620.5" stroke="#333333" stroke-width="1.6" fill="none"/><path d="M1625.5 141 H1648.5 V145.5 L1639.5 152.5 V163.5 H1635.5 V152.5 L1625.5 145.5 Z" stroke="#333333" stroke-width="1.5" fill="#f7f7f7" stroke-linejoin="miter"/><path d="M1645.5 213.5 L1649.5 218.0 L1653.5 213.5" stroke="#333333" stroke-width="1.6" fill="none" stroke-linecap="round" stroke-linejoin="round"/><circle cx="1703.2" cy="145.3" r="15.2" stroke="#333333" stroke-width="1.5" fill="#f8f8f8"/><path d="M1692.5 156.5 L1676 172.8" stroke="#333333" stroke-width="1.5"/><path d="M1719.5 213.5 L1723.5 218.0 L1727.5 213.5" stroke="#333333" stroke-width="1.6" fill="none" stroke-linecap="round" stroke-linejoin="round"/><rect x="1773.5" y="131.5" width="39.5" height="39" stroke="#5c5c5c" stroke-width="2.4" fill="none"/><rect x="1777.8" y="135.8" width="13.5" height="13.2" stroke="#5c5c5c" stroke-width="1.9" fill="none"/><rect x="1795.3" y="135.8" width="13.5" height="13.2" stroke="#5c5c5c" stroke-width="1.9" fill="none"/><rect x="1777.8" y="153.3" width="13.5" height="13.2" stroke="#5c5c5c" stroke-width="1.9" fill="none"/><rect x="1795.3" y="153.3" width="13.5" height="13.2" stroke="#5c5c5c" stroke-width="1.9" fill="none"/><path d="M1878 242.5 L1885.5 250.0 L1893 242.5" stroke="#333333" stroke-width="1.6" fill="none" stroke-linecap="round" stroke-linejoin="round"/><circle cx="42" cy="290" r="11" stroke="#2a7fc6" stroke-width="1.8" fill="#fff"/><circle cx="42" cy="284.8" r="1.5" fill="#2a7fc6"/><path d="M42 288 V296" stroke="#2a7fc6" stroke-width="2.4"/><path d="M1878.5 283.5 L1891.5 296.5 M1891.5 283.5 L1878.5 296.5" stroke="#262626" stroke-width="1.6"/><path d="M141 339.5 L148.0 346.5 L155 339.5" stroke="#333333" stroke-width="1.6" fill="none" stroke-linecap="round" stroke-linejoin="round"/><circle cx="178.8" cy="334.5" r="1.7" fill="#333"/><circle cx="178.8" cy="341" r="1.7" fill="#333"/><circle cx="178.8" cy="347.5" r="1.7" fill="#333"/><path d="M204.5 333.5 L221.5 349.5 M221.5 333.5 L204.5 349.5" stroke="#a8a8a8" stroke-width="1.4"/><path d="M237.5 341.5 L244.5 348.5 L261 333" stroke="#a8a8a8" stroke-width="1.4" fill="none"/><text x="273" y="349" font-family="Liberation Serif" font-style="italic" font-weight="400" font-size="24" fill="#333333" textLength="23" lengthAdjust="spacingAndGlyphs">fx</text><path d="M1887 336.5 L1894.0 343.5 L1901 336.5" stroke="#333333" stroke-width="1.6" fill="none" stroke-linecap="round" stroke-linejoin="round"/><path d="M36 375 V393 H16 Z" fill="#d9d9d9"/><path d="M770 443.5 H777 V450.5 H784 V457.5 H777 V464.5 H770 V457.5 H763 V450.5 H770 Z" fill="#fff" stroke="#000" stroke-width="1.6" stroke-linejoin="miter"/><path d="M1494 982.5 H1512 V1000 H1494 Z M1494 988.3 H1512 M1494 994.2 H1512 M1500 982.5 V1000 M1506 982.5 V1000" stroke="#3a3a3a" stroke-width="1.7" fill="none"/><rect x="1553.8" y="982.8" width="20" height="17.4" stroke="#3a3a3a" stroke-width="1.6" fill="none"/><rect x="1557.8" y="985.8" width="12" height="11.4" stroke="#3a3a3a" stroke-width="1.3" fill="none"/><path d="M1560 989 H1567.5 M1560 991.5 H1567.5 M1560 994 H1567.5" stroke="#3a3a3a" stroke-width="1.1"/><path d="M1614 982.8 H1634 V1000 H1614 Z M1614 993 H1627.5 V982.8 M1620.5 982.8 V993" stroke="#3a3a3a" stroke-width="1.6" fill="none"/><path d="M1662 991.5 H1672.7" stroke="#555" stroke-width="1.4"/><path d="M1682 991.5 H1829.7" stroke="#666" stroke-width="1.5"/><rect x="1752" y="983.2" width="8" height="16.4" fill="#666"/><path d="M1838 991.5 H1849 M1843.5 986 V997" stroke="#555" stroke-width="1.4"/><circle cx="97.4" cy="984.6" r="2.7" stroke="#222" stroke-width="1.5" fill="none"/><path d="M94 987 L90.5 985.6 C88.5 985,87.6 987.6,89.5 988.6 L93.6 990.2 L93.4 995.5 L91.8 1000 C91.2 1002,93.8 1003,94.8 1001.2 L97.4 995.6 L100 1001 C100.5 1002.2,102 1002.3,102.4 1001.6 M101 990.2 L101.6 989.5 L105.6 988.4 C107.6 987.6,107 984.8,104.8 985.4 L100.8 987" stroke="#222" stroke-width="1.5" fill="none" stroke-linejoin="round" stroke-linecap="round"/><path d="M102.8 993.6 C102.8 990.6,108.6 990.4,108.6 993.6 C108.6 995.8,105.6 996,105.6 998.6" stroke="#222" stroke-width="1.5" fill="none" stroke-linecap="round"/><circle cx="105.6" cy="1001.4" r="1" fill="#222"/><path d="M37.5 1027 L44 1025.5 L44.5 1058 L37.5 1060 Z" fill="#e8650f"/><path d="M44 1029 L57.5 1030.5 V1056 L44.5 1058 Z" fill="#d4570a"/><path d="M32.5 1037 H44 C50 1035,55 1035,61.5 1037.5 M32.5 1044.5 H44 C50 1042.5,55 1042.5,61.5 1045 M32.5 1051.5 H44 C50 1049.5,55 1049.5,61.5 1052" stroke="#f59a5a" stroke-width="2.4" fill="none"/><circle cx="57.5" cy="1029.3" r="11.5" fill="#d62b20" stroke="#1f1f1f" stroke-width="1"/><text x="52.8" y="1035.6" font-family="Liberation Sans" font-size="17" fill="#fff">5</text><defs><linearGradient id="wg" x1="0" y1="0" x2="1" y2="1"><stop offset="0" stop-color="#7be0ff"/><stop offset="1" stop-color="#0a8fe6"/></linearGradient></defs><rect x="518" y="1027" width="17" height="17" rx="1.5" fill="url(#wg)"/><rect x="536.5" y="1027" width="17" height="17" rx="1.5" fill="url(#wg)"/><rect x="518" y="1045.5" width="17" height="17" rx="1.5" fill="url(#wg)"/><rect x="536.5" y="1045.5" width="17" height="17" rx="1.5" fill="url(#wg)"/><circle cx="600.5" cy="1042" r="8" stroke="#2a2a2a" stroke-width="2.4" fill="none"/><path d="M606.5 1048 L612 1053.5" stroke="#2a2a2a" stroke-width="2.6" stroke-linecap="round"/><path d="M847.5 1054.5 L881.5 1041.5 L884.5 1047.5 L850.5 1061.5 Z" fill="#e9e4d0" stroke="#cfc7ae" stroke-width="0.8"/><ellipse cx="849" cy="1058" rx="2.2" ry="3.6" transform="rotate(-22 849 1058)" fill="#bdb59c"/><circle cx="870.5" cy="1049.3" r="2.6" fill="#e0c77a"/><path d="M867 1046.5 L870 1045.5 L868.5 1048 Z M872 1052 L875.5 1053 L872.5 1050.5 Z" fill="#d8283a"/><path d="M867.5 1047 C869 1044.5,872.5 1045,873 1047 M868 1052 C870 1054,874 1053,874 1051" stroke="#d8283a" stroke-width="1.6" fill="none"/><path d="M843.5 1040 L865 1035.5 L865 1043.5 C862 1047,851 1048.5,845 1047.5 Z" fill="#2c2f34"/><path d="M829.5 1041.5 L849 1031 L874 1028.8 L859 1037.5 Z" fill="#3c3f45"/><path d="M851 1034 L841.8 1040" stroke="#d8a62a" stroke-width="1"/><path d="M840.8 1040.5 L843 1040.5 L844.2 1057.8 L840.6 1057.8 Z" fill="#e3aa2c"/><rect x="921" y="1036" width="23" height="25" rx="2" fill="#5e5e5e"/><rect x="935" y="1027" width="23" height="21" rx="2" fill="#f2f2f2"/><rect x="935" y="1036" width="9" height="12" fill="#c4c4c4"/><defs><linearGradient id="cpA" x1="0" y1="0" x2="0" y2="1"><stop offset="0" stop-color="#1aa0ff"/><stop offset="0.55" stop-color="#36c06a"/><stop offset="1" stop-color="#ffd21a"/></linearGradient><linearGradient id="cpB" x1="0" y1="0" x2="0" y2="1"><stop offset="0" stop-color="#a64be8"/><stop offset="0.5" stop-color="#f25c9a"/><stop offset="1" stop-color="#ff9a5c"/></linearGradient></defs><path d="M994 1029 H1012 L1014 1035 L1006 1051 H996 C990 1051,987.5 1048,989 1044 Z" fill="url(#cpA)"/><path d="M1005 1037 H1017 C1021 1037,1022 1040,1021 1043 L1015 1059 H997 L995.5 1053 Z" fill="url(#cpB)"/><path d="M1007 1037 L1011 1037 L1004 1051 H1000 Z" fill="#1b2550"/><path d="M1053 1029.5 A1.5 1.5 0 0 1 1054.5 1028 H1065 L1068 1031 H1088 A1 1 0 0 1 1089 1032 V1060 H1053 Z" fill="#e9a812"/><rect x="1053" y="1033" width="36" height="27" rx="1" fill="#fcd24a"/><rect x="1059" y="1050" width="24" height="10.5" rx="1.5" fill="#1b86dc"/><path d="M1064 1055 H1078" stroke="#0c4f8e" stroke-width="1.6"/><circle cx="1137" cy="1044" r="18" fill="#1ea446"/><path d="M1137 1026 A18 18 0 0 1 1152.6 1035 L1137 1035 A9 9 0 0 0 1129.2 1039.5 L1121.4 1026 Z" fill="#ea4335"/><path d="M1137 1026 A18 18 0 0 0 1121.4 1035 L1129.2 1048.5 A9 9 0 0 1 1137 1035 H1152.6 A18 18 0 0 0 1137 1026 Z" fill="#ea4335"/><path d="M1152.6 1035 A18 18 0 0 1 1137 1062 L1144.8 1048.5 A9 9 0 0 0 1137 1035 Z" fill="#fbc02d"/><path d="M1121.4 1035 A18 18 0 0 0 1137 1062 L1144.8 1048.5 A9 9 0 0 1 1129.2 1048.5 Z" fill="#1ea446"/><circle cx="1137" cy="1044" r="9.3" fill="#fff"/><circle cx="1137" cy="1044" r="7.6" fill="#3b7de8"/><rect x="1133.3" y="1068.3" width="8.6" height="4.4" rx="2.2" fill="#9a9a9a"/><rect x="1199" y="1068.3" width="8.6" height="4.4" rx="2.2" fill="#9a9a9a"/><rect x="1265" y="1068.3" width="8.6" height="4.4" rx="2.2" fill="#9a9a9a"/><circle cx="1203" cy="1044.5" r="17" fill="#f4f4f4"/><path d="M1200 1032.5 V1035" stroke="#36c5f0" stroke-width="3.3" stroke-linecap="round"/><path d="M1192.5 1040.5 H1198" stroke="#36c5f0" stroke-width="3.3" stroke-linecap="round"/><path d="M1205.8 1033 V1041" stroke="#2eb67d" stroke-width="3.3" stroke-linecap="round"/><path d="M1212.3 1040.5 H1213.5" stroke="#2eb67d" stroke-width="3.3" stroke-linecap="round"/><path d="M1200 1047.5 V1055" stroke="#e01e5a" stroke-width="3.3" stroke-linecap="round"/><path d="M1193 1046.5 H1193.5" stroke="#e01e5a" stroke-width="3.3" stroke-linecap="round"/><path d="M1205.5 1047 H1213" stroke="#ecb22e" stroke-width="3.3" stroke-linecap="round"/><path d="M1206.3 1053.5 V1054.5" stroke="#ecb22e" stroke-width="3.3" stroke-linecap="round"/><path d="M1254 1060 L1256.5 1052.5 A16 16 0 1 1 1262 1057.5 Z" stroke="#25d366" stroke-width="2.8" fill="none" stroke-linejoin="round"/><path d="M1263 1037 C1261.5 1038,1261 1040,1262.5 1043.5 C1264.5 1048,1268.5 1051.5,1273 1052.5 C1275.5 1053,1277 1052,1277.5 1050.5 L1274 1048 L1271.5 1049.5 C1269 1048.5,1266.5 1046,1265.5 1043.5 L1267 1041 L1265 1037 Z" fill="#25d366"/><rect x="1311" y="1014.5" width="53.5" height="58.5" rx="7" fill="#262626" stroke="#333" stroke-width="1"/><rect x="1305.5" y="1014.2" width="52.2" height="59" rx="7" fill="#2c2c2c" stroke="#3a3a3a" stroke-width="1"/><path d="M1324 1027.2 H1335 V1039 H1321 V1030.2 A3 3 0 0 1 1324 1027.2 Z" fill="#5cc860"/><path d="M1335 1027.2 H1345.3 A3 3 0 0 1 1348.3 1030.2 V1039 H1335 Z" fill="#8de36a"/><path d="M1321 1039 H1348.3 V1057.2 A3 3 0 0 1 1345.3 1060.2 H1324 A3 3 0 0 1 1321 1057.2 Z" fill="#1f8a3a"/><path d="M1335 1039 H1348.3 V1057 A3 3 0 0 1 1345.3 1060.2 H1335 Z" fill="#2a9a45"/><rect x="1317.5" y="1042" width="14.3" height="14" rx="2.5" fill="#0f6d3b"/><path d="M1321.3 1045.3 L1328 1052.8 M1328 1045.3 L1321.3 1052.8" stroke="#fff" stroke-width="2"/><rect x="1323" y="1068" width="23.7" height="4.9" rx="2.4" fill="#4cc2ff"/><path d="M1471.5 1047 L1479.3 1039.5 L1487 1047" stroke="#fff" stroke-width="1.8" fill="none"/><path d="M1519 1051 C1514 1051,1514 1043.5,1518.5 1043 C1519 1037,1528 1034.5,1531 1040.5 C1534.5 1040.5,1536 1044,1535 1047 L1530 1051 Z" fill="#d4d4d4"/><circle cx="1532.2" cy="1049.6" r="7" fill="#1a73d1" stroke="#1f1f1f" stroke-width="1"/><path d="M1532.2 1048 V1053.5" stroke="#fff" stroke-width="1.7"/><circle cx="1532.2" cy="1045.8" r="1" fill="#fff"/><rect x="1571" y="1032.5" width="8.5" height="15" rx="4.25" stroke="#8edcef" stroke-width="1.6" fill="none"/><path d="M1567 1043.5 C1567 1049.5,1571 1052,1575.2 1052 C1579.5 1052,1583.5 1049.5,1583.5 1043.5 M1575.2 1052 V1056.5" stroke="#8edcef" stroke-width="1.6" fill="none"/><path d="M1694 1033.5 H1678 V1050 H1694 M1686 1050 V1054.5 M1681 1054.5 H1695.5" stroke="#fff" stroke-width="1.5" fill="none"/><rect x="1694.5" y="1033" width="6" height="8" rx="2" stroke="#fff" stroke-width="1.4" fill="none"/><path d="M1697.5 1041 V1056" stroke="#fff" stroke-width="1.4"/><path d="M1713.5 1040.5 H1717.5 L1723 1035.5 V1053 L1717.5 1048.5 H1713.5 Z" stroke="#fff" stroke-width="1.5" fill="none" stroke-linejoin="round"/><path d="M1726 1041 C1728 1043,1728 1046,1726 1048 M1729.5 1038 C1733 1041.5,1733 1047,1729.5 1050.5 M1733 1035.5 C1738 1040.5,1738 1048,1733 1053" stroke="#fff" stroke-width="1.5" fill="none"/><path d="M1752 1038.5 H1768.5 A2 2 0 0 1 1770.5 1040.5 V1049 A2 2 0 0 1 1768.5 1051 H1751.5 A2 2 0 0 1 1749.5 1049 V1041" stroke="#fff" stroke-width="1.5" fill="none"/><path d="M1772 1042 V1047" stroke="#fff" stroke-width="2"/><path d="M1754 1032.5 L1750.5 1039 H1754.5 L1751.5 1044.5" stroke="#fff" stroke-width="1.4" fill="none"/><path d="M1753 1049.5 L1768.5 1042 V1049.5 Z" fill="#fff"/></svg>
</body></html>
